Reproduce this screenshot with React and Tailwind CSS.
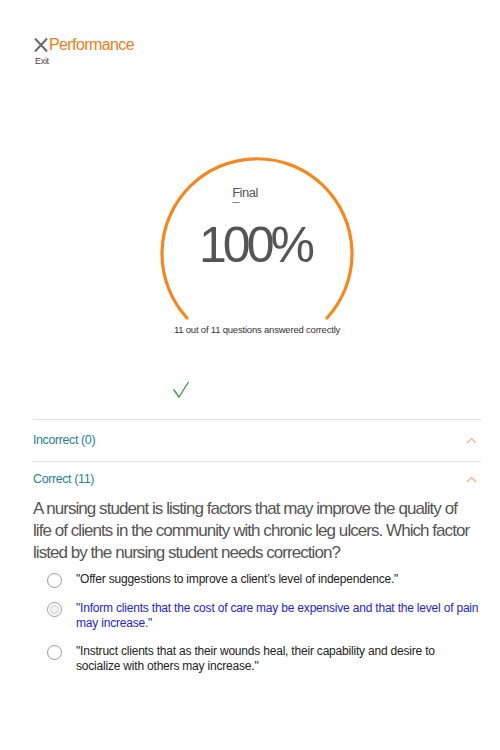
import React from "react";

const font = { fontFamily: '"Liberation Sans", Arial, sans-serif' };

function Radio({ selected }) {
  return (
    <div className="w-[15px] h-[15px] rounded-full border border-[#9a9a9a] bg-white flex items-center justify-center shrink-0 mt-[1px]">
      {selected && <div className="w-[9px] h-[9px] rounded-full border border-[#c8c8c8] bg-[#f2f2f2]" />}
    </div>
  );
}

function Chevron() {
  return (
    <svg width="11" height="7" viewBox="0 0 11 7" className="mr-[4px]">
      <path d="M1 6 L5.5 1.5 L10 6" fill="none" stroke="#f2b08a" strokeWidth="1.2" />
    </svg>
  );
}

export default function App() {
  return (
    <div className="w-[500px] h-[750px] bg-white text-[#555]" style={font}>
      <div className="pl-[33px] pr-[19px] pt-[35px]">
        <div className="flex items-center h-[20px]">
          <svg width="16" height="16" viewBox="0 0 16 16">
            <path d="M2 1.5 L14 14.5 M14 1.5 L2 14.5" stroke="#6b6b6b" strokeWidth="2" fill="none" />
          </svg>
          <span className="text-[16px] text-[#f07d1a] leading-none tracking-[-0.6px]">Performance</span>
        </div>
        <div className="text-[9px] text-[#444] leading-none mt-[2px] ml-[2px] tracking-[-0.3px]">Exit</div>

        <div className="relative mt-[88px] h-[182px] flex flex-col items-center">
          <svg width="200" height="172" viewBox="0 0 200 172" className="absolute top-0 left-[124px]">
            <path d="M 30 164 A 95 95 0 1 1 170 164" fill="none" stroke="#f5871f" strokeWidth="3.2" strokeLinecap="round" />
          </svg>
          <div className="mt-[32px] text-[13px] text-[#555] leading-none ml-[-24px] tracking-[-0.5px]">
            <span className="underline underline-offset-[5px] decoration-[#888]">F</span>inal
          </div>
          <div className="mt-[21px] text-[50px] text-[#555] leading-none tracking-[-4px] pr-[4px]">100%</div>
          <div className="mt-[55px] text-[9.5px] text-[#333] leading-none tracking-[-0.2px]">11 out of 11 questions answered correctly</div>
        </div>

        <div className="flex justify-center pr-[153px] mt-[45px]">
          <svg width="18" height="18" viewBox="0 0 18 18">
            <path d="M1.5 8.5 L7 16 L16.5 1" fill="none" stroke="#3f9e3f" strokeWidth="1.4" />
          </svg>
        </div>

        <div className="mt-[20px] border-t border-[#e3e3e3]">
          <div className="h-[41px] flex items-center justify-between">
            <span className="text-[12.5px] text-[#277f9c] tracking-[-0.4px]">Incorrect (0)</span>
            <Chevron />
          </div>
        </div>
        <div className="border-t border-[#e3e3e3]">
          <div className="h-[34px] flex items-center justify-between">
            <span className="text-[12.5px] text-[#277f9c] tracking-[-0.4px]">Correct (11)</span>
            <Chevron />
          </div>
        </div>

        <div className="text-[17px] leading-[22px] text-[#555] mt-[2px] tracking-[-0.95px]">
          A nursing student is listing factors that may improve the quality of
          <br />
          life of clients in the community with chronic leg ulcers. Which factor
          <br />
          listed by the nursing student needs correction?
        </div>

        <div className="mt-[8px] pl-[14px] flex flex-col gap-[13px] text-[12px] leading-[15px] tracking-[-0.2px]">
          <div className="flex gap-[14px]">
            <Radio />
            <span className="text-[#222]">"Offer suggestions to improve a client’s level of independence."</span>
          </div>
          <div className="flex gap-[14px]">
            <Radio selected />
            <span className="text-[#2323d8]">"Inform clients that the cost of care may be expensive and that the level of pain may increase."</span>
          </div>
          <div className="flex gap-[14px]">
            <Radio />
            <span className="text-[#222]">"Instruct clients that as their wounds heal, their capability and desire to socialize with others may increase."</span>
          </div>
        </div>
      </div>
    </div>
  );
}
